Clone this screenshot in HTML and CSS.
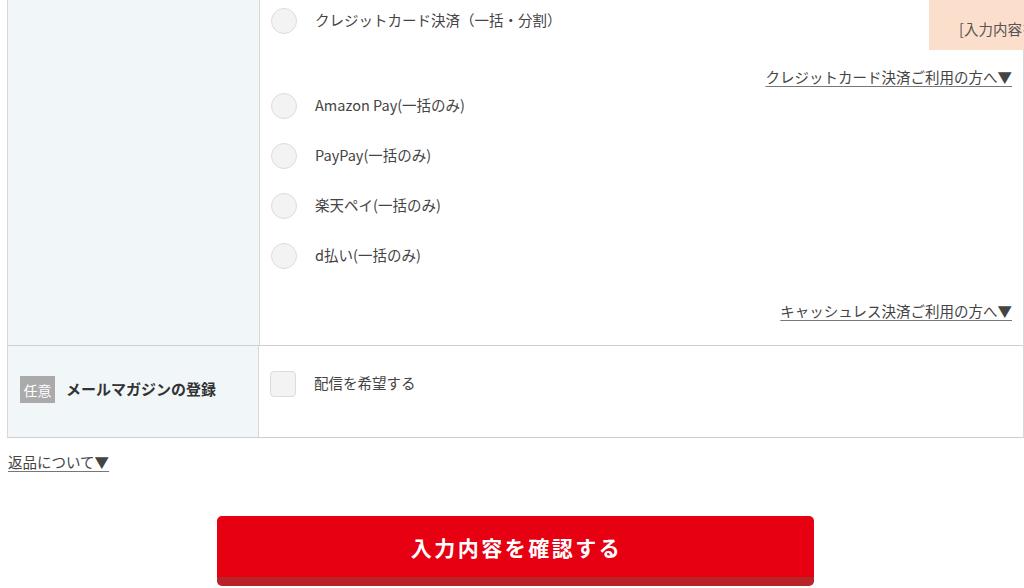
FILE: index.html
```html
<!DOCTYPE html>
<html lang="ja">
<head>
<meta charset="utf-8">
<title>ご注文手続き</title>
<link rel="stylesheet" href="styles.css">
</head>
<body>
<div class="page">
  <div class="form-table">
    <div class="row">
      <div class="th"></div>
      <div class="td pay-list">
        <label class="opt"><span class="radio"></span><span class="opt-text">クレジットカード決済（一括・分割）</span></label>
        <div class="note"><a href="#" class="more">クレジットカード決済ご利用の方へ▼</a></div>
        <label class="opt"><span class="radio"></span><span class="opt-text">Amazon Pay(一括のみ)</span></label>
        <label class="opt"><span class="radio"></span><span class="opt-text">PayPay(一括のみ)</span></label>
        <label class="opt"><span class="radio"></span><span class="opt-text">楽天ペイ(一括のみ)</span></label>
        <label class="opt"><span class="radio"></span><span class="opt-text">d払い(一括のみ)</span></label>
        <div class="note note-last"><a href="#" class="more">キャッシュレス決済ご利用の方へ▼</a></div>
      </div>
    </div>
    <div class="row row-mail">
      <div class="th th-mail"><span class="badge">任意</span><span class="th-label">メールマガジンの登録</span></div>
      <div class="td mail-cell">
        <label class="opt"><span class="check"></span><span class="opt-text">配信を希望する</span></label>
      </div>
    </div>
  </div>
  <p class="return"><a href="#" class="more">返品について▼</a></p>
  <div class="submit-wrap"><button class="submit" type="button">入力内容を確認する</button></div>
</div>
<div class="float-note">[入力内容を確認する]</div>
</body>
</html>
```

FILE: styles.css
```css
html, body {
  margin: 0;
  padding: 0;
  overflow: hidden;
  background: #fff;
}
body {
  font-family: "Noto Sans CJK JP", "Noto Sans", sans-serif;
  color: #444;
  font-size: 14.5px;
  position: relative;
  height: 588px;
}
.page {
  padding-left: 7px;
}
.form-table {
  border-left: 1px solid #d8d8d8;
  border-right: 1px solid #d8d8d8;
}
.row {
  display: flex;
  border-bottom: 1px solid #cfcfcf;
}
.th {
  width: 251px;
  flex: none;
  background: #f1f6f9;
  border-right: 1px solid #d8d8d8;
}
.td {
  flex: 1;
  padding-left: 11px;
  padding-right: 11px;
}
.pay-list {
  display: flex;
  flex-direction: column;
  padding-top: 8px;
  padding-bottom: 23px;
}
.opt {
  display: flex;
  align-items: center;
  height: 26px;
  margin-bottom: 24px;
}
.radio {
  width: 24px;
  height: 24px;
  border-radius: 50%;
  background: #f3f3f3;
  border: 1px solid #dcdcdc;
  flex: none;
}
.check {
  width: 24px;
  height: 24px;
  border-radius: 4px;
  background: #f3f3f3;
  border: 1px solid #dcdcdc;
  flex: none;
}
.opt-text {
  margin-left: 18px;
  line-height: 22px;
  position: relative;
  top: -1px;
  color: #444;
}
.note {
  text-align: right;
  line-height: 22px;
  padding-top: 8px;
  margin-bottom: 5px;
}
.note-last {
  padding-top: 7px;
  margin-bottom: 0;
}
.more {
  color: #444;
  text-decoration: underline;
  text-underline-offset: 3px;
  text-decoration-color: #777;
}
.th-mail {
  display: flex;
  align-items: center;
  padding-left: 12px;
  box-sizing: border-box;
  padding-bottom: 4px;
}
.badge {
  display: inline-flex;
  align-items: center;
  justify-content: center;
  width: 35px;
  height: 27px;
  background: #aaaaaa;
  color: #fff;
  font-size: 14px;
}
.th-label {
  margin-left: 11px;
  font-weight: bold;
  color: #333;
  font-size: 15px;
  position: relative;
  top: -1px;
}
.mail-cell {
  padding-top: 25px;
  padding-bottom: 40px;
}
.mail-cell .opt {
  margin-bottom: 0;
}
.return {
  margin: 13px 0 0;
  line-height: 22px;
  padding-left: 1px;
}
.submit-wrap {
  display: flex;
  justify-content: center;
  margin-top: 43px;
}
.submit {
  width: 597px;
  height: 70px;
  background: #e60012;
  border: none;
  border-bottom: 9px solid #b8232a;
  border-radius: 5px;
  color: #fff;
  font-family: "Noto Sans CJK JP", sans-serif;
  font-weight: bold;
  font-size: 21px;
  letter-spacing: 2.5px;
  padding: 0 0 0 2px;
  cursor: pointer;
}
.float-note {
  position: absolute;
  top: 0;
  left: 929px;
  height: 50px;
  padding: 0 30px;
  background: #fbdfcc;
  white-space: nowrap;
  display: flex;
  align-items: center;
  padding-top: 6px;
  box-sizing: border-box;
  color: #555;
  font-size: 14.5px;
}
```
